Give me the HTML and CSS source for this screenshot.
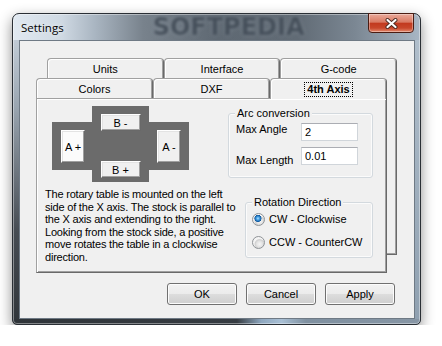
FILE: index.html
```html
<!DOCTYPE html>
<html lang="en">

<head>
    <meta charset="UTF-8" />
    <meta name="viewport" content="width=device-width, initial-scale=1.0" />
    <title>Settings</title>
    <link rel="stylesheet" href="styles.css">
</head>

<body>
    <div class="window">
        <div class="titlebar">
            <span class="title">Settings</span>
            <span class="watermark">SOFTPEDIA</span>
            <button class="close-btn" type="button">
                <svg width="13" height="11" viewBox="0 0 13 11">
                    <path d="M2.5 2 L10.5 9 M10.5 2 L2.5 9" stroke="#4a2a22" stroke-width="4" stroke-linecap="round" />
                    <path d="M2.5 2 L10.5 9 M10.5 2 L2.5 9" stroke="#fff" stroke-width="2.2" stroke-linecap="round" />
                </svg>
            </button>
        </div>

        <div class="client">
            <div class="tab-stack">
                <!-- back row of tabs -->
                <div class="sheet sheet-back">
                    <div class="tab-row">
                        <div class="tab">Units</div>
                        <div class="tab">Interface</div>
                        <div class="tab">G-code</div>
                    </div>
                    <div class="sheet-body"></div>
                </div>

                <!-- front row with the open page -->
                <div class="sheet sheet-front">
                    <div class="tab-row">
                        <div class="tab">Colors</div>
                        <div class="tab">DXF</div>
                        <div class="tab tab-active"><span class="focus">4th Axis</span></div>
                    </div>
                    <div class="panel">
                        <div class="panel-top">
                            <div class="jog">
                                <span class="jog-h"></span>
                                <span class="jog-v"></span>
                                <button class="jog-btn jog-a-plus" type="button">A +</button>
                                <button class="jog-btn jog-a-minus" type="button">A -</button>
                                <button class="jog-btn jog-b-minus" type="button">B -</button>
                                <button class="jog-btn jog-b-plus" type="button">B +</button>
                            </div>

                            <div class="group group-arc">
                                <div class="group-title">Arc conversion</div>
                                <div class="field-grid">
                                    <label for="max_angle">Max Angle</label>
                                    <input type="text" id="max_angle" value="2" />
                                    <label class="label-low" for="max_length">Max Length</label>
                                    <input type="text" id="max_length" value="0.01" />
                                </div>
                            </div>
                        </div>

                        <div class="panel-bottom">
                            <p class="note">The rotary table is mounted on the left<br>side of the X axis. The stock is parallel to<br>the X axis and extending to the right.<br>Looking from the stock side, a positive<br>move rotates the table in a clockwise<br>direction.</p>

                            <div class="group group-dir">
                                <div class="group-title">Rotation Direction</div>
                                <label class="radio-row">
                                    <input type="radio" name="direction" checked />
                                    CW - Clockwise
                                </label>
                                <label class="radio-row">
                                    <input type="radio" name="direction" />
                                    CCW - CounterCW
                                </label>
                            </div>
                        </div>
                    </div>
                </div>
            </div>

            <div class="dialog-buttons">
                <button class="btn" type="button">OK</button>
                <button class="btn" type="button">Cancel</button>
                <button class="btn" type="button">Apply</button>
            </div>
        </div>
    </div>
</body>

</html>
```

FILE: styles.css
```css
body {
    margin: 0;
    background: #fff;
    font-family: "Liberation Sans", Arial, sans-serif;
    font-size: 11px;
    color: #000;
}

/* Aero glass frame */
.window {
    box-sizing: border-box;
    width: 409px;
    height: 312px;
    margin: 13px 0 0 12px;
    padding: 0 5px 5px 6px;
    display: flex;
    flex-direction: column;
    border: 1px solid #2a2f35;
    border-radius: 7px 7px 5px 5px;
    background:
        linear-gradient(90deg, #2f3439 0, #363c42 55%, #8ea7bf 61%, #a9c0d5 66%, #7f90a0 72%, #8796a5 100%) left bottom / 100% 5px no-repeat,
        linear-gradient(90deg, #e1e9f1 0, #cfd9e3 12%, #aab6c2 20%, #78828c 32%, #5f6973 50%, #616b75 70%, #7b8793 84%, #a8b6c4 100%) left top / 100% 26px no-repeat,
        linear-gradient(180deg, #d0dae4 0, #9aa5b0 30%, #464c53 70%, #30353a 100%) left top / 6px 100% no-repeat,
        linear-gradient(180deg, #b3c1ce, #8fa0b0) right top / 5px 100% no-repeat,
        #6d7985;
    box-shadow: inset 0 0 0 1px rgba(255, 255, 255, 0.4), 0 5px 14px rgba(0, 0, 0, 0.45);
}

.titlebar {
    height: 26px;
    display: flex;
    align-items: center;
}

.title {
    padding-left: 2px;
    font-family: "Open Sans", sans-serif;
    font-size: 11.5px;
    text-shadow: 0 0 5px rgba(255, 255, 255, 0.8);
}

.watermark {
    margin-left: 89px;
    font-family: "DejaVu Sans", sans-serif;
    font-weight: bold;
    font-size: 24px;
    line-height: 26px;
    color: #444e59;
    text-shadow: 0 0 3px rgba(190, 200, 210, 0.6);
    filter: blur(1.4px);
}

.close-btn {
    align-self: flex-start;
    margin: -1px 1px 0 auto;
    width: 46px;
    height: 20px;
    padding: 0;
    display: flex;
    align-items: center;
    justify-content: center;
    border: 1px solid #4b1c12;
    border-radius: 0 0 4px 4px;
    background: linear-gradient(#eaa99a, #d97a63 45%, #c23a1f 52%, #c8472b 78%, #e48c70);
    box-shadow: inset 0 0 0 1px rgba(255, 255, 255, 0.35);
}

.client {
    flex: 1;
    display: flex;
    flex-direction: column;
    background: #f0f0f0;
    border: 1px solid #6f7a85;
}

/* stacked tab rows */
.tab-stack {
    display: grid;
    width: 361px;
    margin: 17px 0 0 16px;
}

.sheet {
    grid-area: 1 / 1;
    display: flex;
    flex-direction: column;
}

.sheet-back {
    margin-left: 11px;
    height: 197px;
}

.sheet-front {
    margin: 20px 10px 0 0;
    height: 195px;
}

.tab-row {
    display: flex;
    height: 20px;
}

.tab {
    flex: 1;
    box-sizing: border-box;
    display: flex;
    align-items: center;
    justify-content: center;
    background: #f0f0f0;
    border: 1px solid #a0a0a0;
    border-right-color: #696969;
    border-bottom: none;
    border-radius: 4px 4px 0 0;
    box-shadow: inset 1px 1px #fff, inset -1px 0 #a0a0a0;
}

.tab-active {
    position: relative;
    z-index: 1;
    margin-bottom: -1px;
    padding-top: 1px;
    font-weight: bold;
}

.focus {
    padding: 0 2px;
    line-height: 13px;
    border: 1px dotted #000;
}

.sheet-body {
    flex: 1;
    background: #f0f0f0;
    border-right: 1px solid #696969;
    border-bottom: 1px solid #696969;
    box-shadow: inset -1px -1px #a0a0a0;
}

.panel {
    flex: 1;
    box-sizing: border-box;
    background: #f0f0f0;
    border: 1px solid #a0a0a0;
    border-right-color: #696969;
    border-bottom-color: #696969;
    box-shadow: inset 1px 1px #fff, inset -1px -1px #a0a0a0;
}

.panel-top {
    display: flex;
    align-items: flex-start;
    padding: 7px 0 0 15px;
}

/* jog cross */
.jog {
    display: grid;
    grid-template-columns: 40px 57px 40px;
    grid-template-rows: 16px 48px 12px;
}

.jog-h {
    grid-row: 2;
    grid-column: 1 / 4;
    background: #6b6b6b;
}

.jog-v {
    grid-row: 1 / 4;
    grid-column: 2;
    background: #6b6b6b;
}

.jog-btn {
    box-sizing: border-box;
    padding: 0;
    font-family: inherit;
    font-size: 11px;
    color: #000;
    background: #f0f0f0;
    border: 1px solid;
    border-color: #fff #696969 #696969 #fff;
    box-shadow: inset -1px -1px #a0a0a0, inset 1px 1px #e3e3e3;
}

.jog-a-plus,
.jog-a-minus {
    width: 24px;
    height: 33px;
    align-self: start;
    justify-self: start;
}

.jog-a-plus {
    grid-area: 2 / 1;
    margin: 8px 0 0 9px;
    background: #fbfbfb;
}

.jog-a-minus {
    grid-area: 2 / 3;
    margin: 8px 0 0 8px;
}

.jog-b-minus,
.jog-b-plus {
    grid-column: 2;
    width: 40px;
    height: 17px;
    justify-self: center;
}

.jog-b-minus {
    grid-row: 1 / 3;
    align-self: start;
    margin-top: 8px;
}

.jog-b-plus {
    grid-row: 2 / 4;
    align-self: end;
    margin-bottom: 4px;
}

/* group boxes */
.group {
    box-sizing: border-box;
    margin-left: auto;
    margin-right: 13px;
    border: 1px solid #d3d9de;
    border-radius: 3px;
    box-shadow: inset 0 0 0 1px #fbfbfb;
}

.group-title {
    width: fit-content;
    margin: -7px 0 0 6px;
    padding: 0 2px;
    line-height: 13px;
    background: #f0f0f0;
}

.group-arc {
    width: 145px;
    height: 65px;
    margin-top: 7px;
}

.field-grid {
    display: grid;
    grid-template-columns: 65px 57px;
    row-gap: 6px;
    padding: 3px 0 0 7px;
    line-height: 13px;
}

.label-low {
    padding-top: 7px;
}

.field-grid input {
    box-sizing: border-box;
    width: 57px;
    height: 18px;
    padding: 0 3px;
    font-family: inherit;
    font-size: 11px;
    background: #fff;
    border: 1px solid #d0d5da;
    border-top-color: #abadb3;
    outline: none;
}

.panel-bottom {
    display: flex;
    align-items: flex-start;
}

.note {
    margin: 6px 0 0 8px;
    line-height: 12.6px;
    letter-spacing: -0.2px;
    white-space: nowrap;
}

.group-dir {
    width: 128px;
    height: 56px;
    margin-top: 20px;
}

.radio-row {
    display: flex;
    align-items: center;
    gap: 4px;
    height: 13px;
    margin: 4px 0 0 6px;
    line-height: 13px;
}

.radio-row + .radio-row {
    margin-top: 10px;
}

.radio-row input {
    appearance: none;
    box-sizing: border-box;
    width: 13px;
    height: 13px;
    margin: 0;
    border: 1px solid #8f9397;
    border-radius: 50%;
    background: radial-gradient(circle at 60% 65%, #f6f6f6 0, #e3e3e3 3px, #cfcfcf 4.5px, #f4f4f4 5.5px);
}

.radio-row input:checked {
    background:
        radial-gradient(circle at 45% 40%, #b5e4ff 0, #4aa3e6 1.5px, #10599f 3.3px, rgba(16, 89, 159, 0) 3.8px),
        radial-gradient(circle at 60% 65%, #f6f6f6 0, #e3e3e3 3px, #cfcfcf 4.5px, #f4f4f4 5.5px);
}

/* dialog buttons */
.dialog-buttons {
    display: flex;
    justify-content: flex-end;
    gap: 9px;
    margin-top: 10px;
    padding-right: 19px;
}

.btn {
    width: 70px;
    height: 22px;
    padding: 0;
    font-family: inherit;
    font-size: 11px;
    color: #000;
    border: 1px solid #707070;
    border-radius: 3px;
    background: linear-gradient(#f2f2f2, #ebebeb 50%, #dddddd 50%, #cfcfcf);
    box-shadow: inset 0 0 0 1px #fcfcfc;
}
```
